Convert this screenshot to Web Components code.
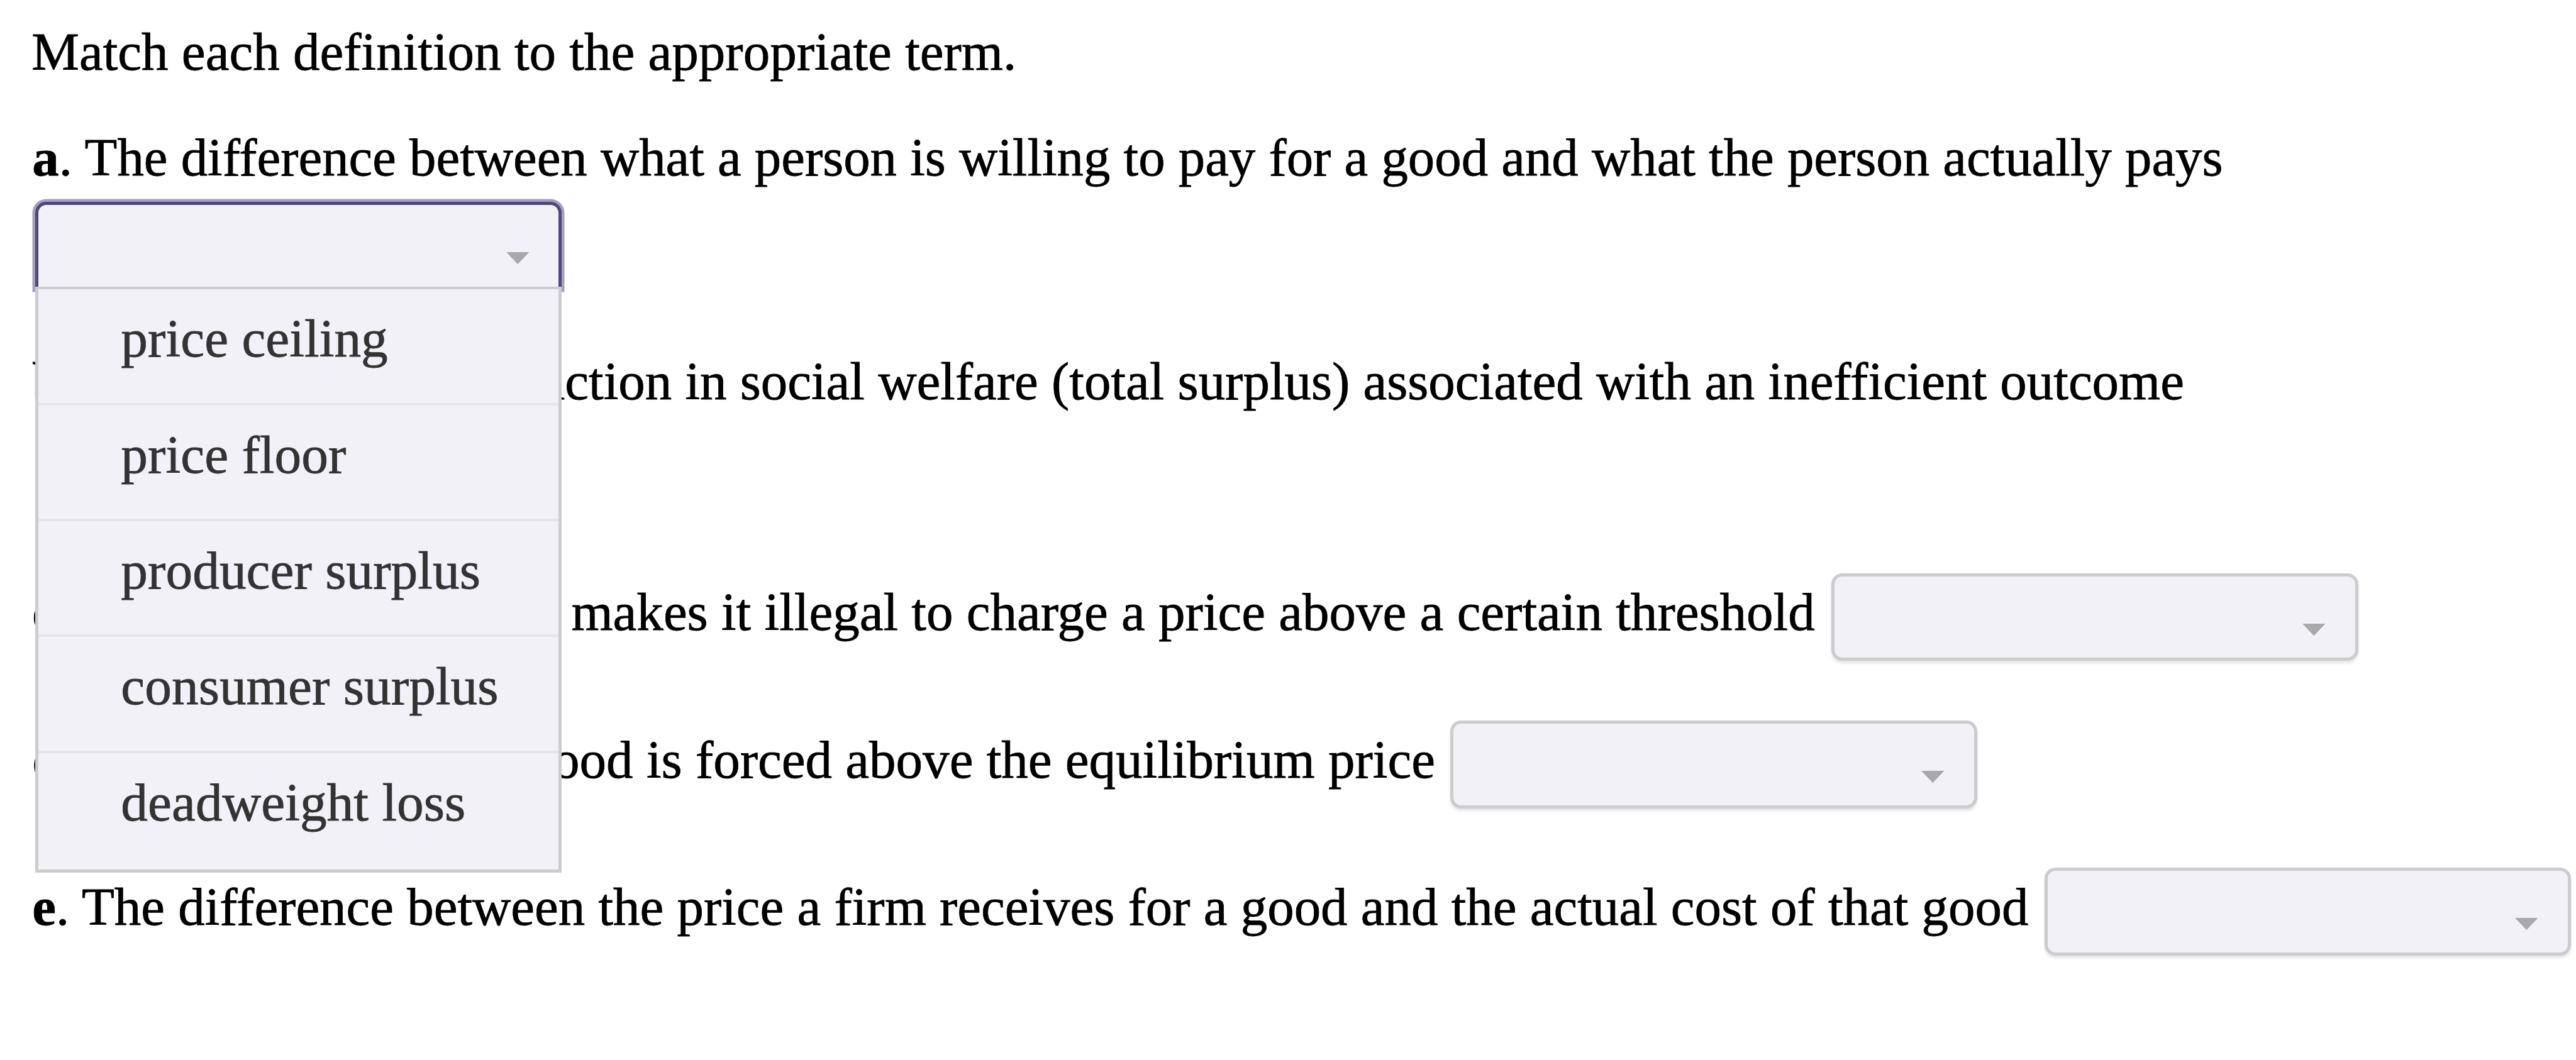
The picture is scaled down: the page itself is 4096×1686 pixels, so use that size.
<!DOCTYPE html>
<html lang="en">
<head>
<meta charset="utf-8">
<title>Match each definition</title>
<style>
  html { --u: 0.98628px; }
  body { margin: 0; background: #fff; color: #000; font-family: "Liberation Serif", "Times New Roman", serif; -webkit-text-stroke: 0.8px currentColor; overflow: hidden; }
</style>
</head>
<body>
<match-question>
  <question-line style="--fs:86.26;--x:-1">Match each definition to the appropriate term.</question-line>
  <question-line style="--fs:86.02;--before:70.2"><b slot="label">a</b>. The difference between what a person is willing to pay for a good and what the person actually pays</question-line>
  <term-select open style="--drop:22.2;--indent:4.8">
    <term-option>price ceiling</term-option>
    <term-option>price floor</term-option>
    <term-option>producer surplus</term-option>
    <term-option>consumer surplus</term-option>
    <term-option>deadweight loss</term-option>
  </term-select>
  <question-line style="--before:98.2;--label:815.8;--fs:86.15"><b slot="label">b</b>uction in social welfare (total surplus) associated with an inefficient outcome</question-line>
  <question-line style="--before:272;--label:869.1;--gap:26.9"><b slot="label">c</b>makes it illegal to charge a price above a certain threshold<term-select slot="answer"></term-select></question-line>
  <question-line style="--before:137.7;--label:839.3;--gap:24.8"><b slot="label">d</b>ood is forced above the equilibrium price<term-select slot="answer"></term-select></question-line>
  <question-line style="--before:137.5;--fs:86.15;--gap:25.5"><b slot="label">e</b>. The difference between the price a firm receives for a good and the actual cost of that good<term-select slot="answer"></term-select></question-line>
</match-question>

<script>
const define = (name, html) => {
  const template = document.createElement('template');
  template.innerHTML = html;
  customElements.define(name, class extends HTMLElement {
    constructor() {
      super();
      this.attachShadow({ mode: 'open' }).append(template.content.cloneNode(true));
    }
  });
};

define('match-question', `
  <style>
    :host {
      display: flex; flex-direction: column; align-items: flex-start;
      box-sizing: border-box; width: 100vw; height: 100vh;
      padding: calc(var(--u) * 33.1) 0 0 calc(var(--u) * 52);
    }
  </style>
  <slot></slot>`);

define('question-line', `
  <style>
    :host {
      display: flex; align-items: flex-start; flex: none; white-space: nowrap;
      height: calc(var(--u) * 100); line-height: calc(var(--u) * 100);
      font-size: calc(var(--u) * var(--fs, 86.25));
      margin-top: calc(var(--u) * var(--before, 0));
      margin-left: calc(var(--u) * var(--x, 0));
    }
    .label { min-width: calc(var(--u) * var(--label, 0)); }
    .answer { display: flex; margin: calc(var(--u) * -12.6) 0 0 calc(var(--u) * var(--gap, 0)); }
  </style>
  <span class="label"><slot name="label"></slot></span>
  <span class="text"><slot></slot></span>
  <span class="answer"><slot name="answer"></slot></span>`);

define('term-select', `
  <style>
    :host {
      display: block; position: relative; flex: none;
      width: calc(var(--u) * 849); height: calc(var(--u) * 141.4);
      margin-top: calc(var(--u) * var(--drop, 0));
      margin-left: calc(var(--u) * var(--indent, 0));
    }
    .box {
      display: flex; justify-content: flex-end; align-items: flex-start;
      box-sizing: border-box; width: 100%; height: 100%;
      padding: calc(var(--u) * 76) calc(var(--u) * 48) 0 0;
      background: #f2f1f7; border: 5px solid #ccc; border-radius: calc(var(--u) * 17.7);
      box-shadow: 0 4px 4px rgba(0,0,0,.1);
    }
    svg { display: block; width: calc(var(--u) * 37); height: calc(var(--u) * 19.5); }
    .menu { display: none; }
    :host([open]) .box {
      border-color: #51477b; border-bottom-width: 0;
      border-radius: calc(var(--u) * 17.7) calc(var(--u) * 17.7) 0 0;
      box-shadow: 0 0 0 4.5px #a59fc0;
    }
    :host([open]) .menu {
      display: flex; flex-direction: column; box-sizing: border-box;
      position: absolute; z-index: 2; left: 0; top: calc(var(--u) * 137);
      width: 100%; background: #f2f1f7; border: 5px solid #ccccd0; border-top-width: 4px;
    }
  </style>
  <div class="box"><svg viewBox="0 0 37 19.5"><path d="M0 0H37L18.5 19.5Z" fill="#a9a9ab"/></svg></div>
  <div class="menu"><slot></slot></div>`);

define('term-option', `
  <style>
    :host {
      display: block; box-sizing: border-box; height: calc(var(--u) * 187);
      padding: calc(var(--u) * 29.5) 0 0 calc(var(--u) * 133.2);
      font-size: calc(var(--u) * 86.6); line-height: calc(var(--u) * 100);
      color: #333; border-bottom: 4px solid #e5e4ea; white-space: nowrap;
    }
    :host(:last-child) { border-bottom: 0; height: calc(var(--u) * 187.4); }
  </style>
  <slot></slot>`);
</script>
</body>
</html>
